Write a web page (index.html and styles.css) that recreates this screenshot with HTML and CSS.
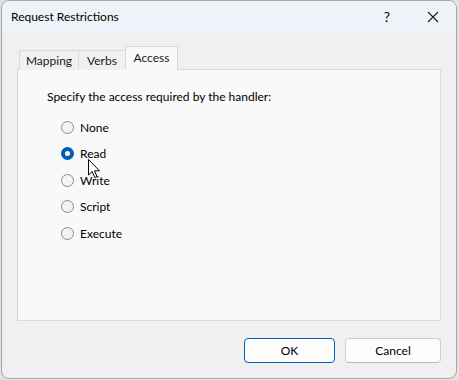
FILE: index.html
```html
<!DOCTYPE html>
<html lang="en">
<head>
    <meta charset="UTF-8">
    <title>Request Restrictions</title>
    <link rel="stylesheet" href="styles.css">
</head>
<body>
    <div class="window">
        <div class="titlebar">
            <span class="title">Request Restrictions</span>
            <span class="title-btn help">?</span>
            <span class="title-btn close">
                <svg width="12" height="12" viewBox="0 0 12 12"><path d="M1 1 L11 11 M11 1 L1 11" stroke="#1a1a1a" stroke-width="1.1" fill="none"/></svg>
            </span>
        </div>

        <div class="dialog-body">
            <div class="tabs">
                <div class="tab tab-mapping">Mapping</div>
                <div class="tab tab-verbs">Verbs</div>
                <div class="tab tab-active">Access</div>
            </div>
            <div class="panel">
                <p class="prompt">Specify the access required by the handler:</p>
                <div class="options">
                    <label class="option"><span class="radio"></span>None</label>
                    <label class="option"><span class="radio checked"></span>Read</label>
                    <label class="option"><span class="radio"></span>Write</label>
                    <label class="option"><span class="radio"></span>Script</label>
                    <label class="option"><span class="radio"></span>Execute</label>
                </div>
            </div>

            <div class="buttons">
                <button class="btn btn-default">OK</button>
                <button class="btn btn-cancel">Cancel</button>
            </div>
        </div>

        <!-- mouse pointer resting on "Read" -->
        <svg class="cursor" width="13" height="20" viewBox="0 0 13 20">
            <path d="M0.5 0.5 L0.5 16 L4.2 12.6 L6.8 18.6 L9 17.6 L6.5 11.8 L11.5 11.8 Z" fill="#fff" stroke="#000" stroke-width="1" stroke-linejoin="miter"/>
        </svg>
    </div>
</body>
</html>
```

FILE: styles.css
```css
body {
    margin: 0;
    width: 459px;
    height: 380px;
    overflow: hidden;
    background-color: #dfe3e8;
    font-family: 'Segoe UI', Lato, 'Noto Sans', sans-serif;
    font-size: 12px;
    color: #000;
}

.window {
    position: relative;
    margin-left: 1px;
    width: 454px;
    height: 377px;
    border: 1px solid #a7a7a7;
    border-radius: 8px;
    background-color: #f0f0f0;
    overflow: hidden;
    display: flex;
    flex-direction: column;
}

.titlebar {
    height: 31px;
    display: flex;
    align-items: center;
    background-color: #eef2f9;
    padding-left: 9px;
}

.title {
    flex-grow: 1;
    font-size: 12px;
}

.title-btn {
    display: flex;
    justify-content: center;
    align-items: center;
    height: 31px;
}

.help {
    width: 46px;
    font-size: 14px;
}

.close {
    width: 46px;
}

.dialog-body {
    padding: 15px 15px 0 15px;
    display: flex;
    flex-direction: column;
}

.tabs {
    display: flex;
    align-items: flex-end;
    height: 23px;
    padding-left: 2px;
    margin-bottom: -1px;
    position: relative;
    z-index: 1;
}

.tab {
    height: 19px;
    line-height: 19px;
    text-align: center;
    border: 1px solid #dadada;
    border-bottom: none;
    background-color: #f0f0f0;
    color: #1a1a1a;
    box-sizing: content-box;
}

.tab-mapping {
    width: 58px;
}

.tab-verbs {
    width: 46px;
    margin-left: -1px;
}

.tab-active {
    width: 51px;
    height: 23px;
    line-height: 21px;
    background-color: #f9f9f9;
    margin-left: -1px;
}

.panel {
    height: 250px;
    border: 1px solid #dadada;
    background-color: #f9f9f9;
    padding: 0 29px;
}

.prompt {
    margin: 19px 0 0 0;
    line-height: 16px;
}

.options {
    display: flex;
    flex-direction: column;
    margin-top: 9px;
    padding-left: 14px;
}

.option {
    display: flex;
    align-items: center;
    height: 26.5px;
    gap: 6px;
}

.radio {
    width: 11px;
    height: 11px;
    border: 1px solid #8a8a8a;
    border-radius: 50%;
    background-color: #f3f3f3;
    box-sizing: content-box;
}

.radio.checked {
    width: 5px;
    height: 5px;
    border: 4px solid #005fb8;
    background-color: #fff;
}

.buttons {
    display: flex;
    justify-content: flex-end;
    gap: 10px;
    margin-top: 17px;
}

.btn {
    height: 25px;
    font-family: inherit;
    font-size: 12px;
    background-color: #fdfdfd;
    border-radius: 4px;
    color: #000;
}

.btn-default {
    width: 91px;
    border: 1px solid #005fb8;
}

.btn-cancel {
    width: 96px;
    border: 1px solid #d0d0d0;
    border-bottom-color: #b8b8b8;
}

.cursor {
    position: absolute;
    left: 86px;
    top: 158px;
}
```
